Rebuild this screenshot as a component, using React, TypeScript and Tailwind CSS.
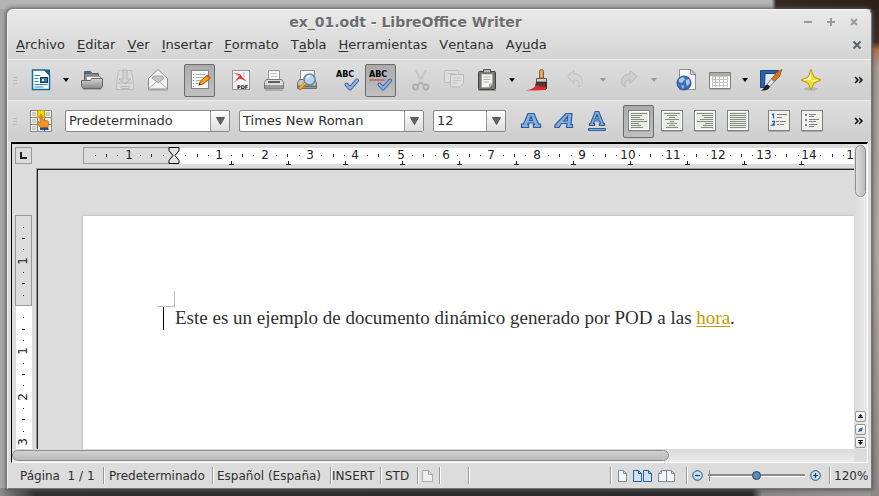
import { useEffect, useRef, useState, type ReactNode } from "react";

/* ---------- toolbar drawings ---------- */

function Icon({ children, size = 24 }: { children: ReactNode; size?: number }) {
  return (
    <svg width={size} height={size} viewBox="0 0 24 24" fill="none" aria-hidden="true" className="shrink-0">
      {children}
    </svg>
  );
}

const NewDoc = () => (
  <Icon>
    <path d="M3.500 2h12l5 5v14.500h-17z" fill="#fff" stroke="#1a6a96" strokeWidth="1.500" />
    <path d="M14.500 1.500h6.500v6z" fill="#17618c" />
    <path d="M5.500 7.500h6M5.500 10.500h4M5.500 13.500h4M5.500 16.500h13M5.500 19h9" stroke="#2f86b5" />
    <rect x="11.500" y="9.500" width="7" height="5" fill="#2b7fb0" stroke="#16394f" />
    <circle cx="14" cy="12" r="1.200" fill="#d8eefa" />
  </Icon>
);

const OpenFolder = () => (
  <Icon>
    <path d="M4.500 12V3.500h6l1.500 2h6.500V12" fill="#8b8b8b" stroke="#5d5d5d" />
    <path d="M5 4h5.500l1 2H5z" fill="#4c68a0" />
    <path d="M6.500 12V8.500h14V12" fill="#f4f4f4" stroke="#9a9a9a" />
    <path d="M1.500 12.500h9l1-2h11v8l-1.500 2H3l-1.500-2z" fill="url(#folder)" stroke="#666" />
    <path d="M3 21.500h18" stroke="#999" strokeOpacity=".7" />
    <defs>
      <linearGradient id="folder" x1="0" y1="10" x2="0" y2="21" gradientUnits="userSpaceOnUse">
        <stop stopColor="#d8d8d8" />
        <stop offset="1" stopColor="#858585" />
      </linearGradient>
    </defs>
  </Icon>
);

const Save = () => (
  <Icon>
    <path d="M5.500 2.500h13l2 12v7h-17v-7z" fill="#dadada" stroke="#bcbcbc" />
    <path d="M10 2v9H6l6 5 6-5h-4V2z" fill="#d2d2d2" stroke="#b4b4b4" />
    <path d="M4 15h16M8 18.500h8v2H8z" stroke="#b8b8b8" />
  </Icon>
);

const Mail = () => (
  <Icon>
    <path d="M2.500 10.500L12 1.500l9.500 9v10.500h-19z" fill="#f3f3f3" stroke="#8b8b8b" />
    <path d="M6 10l6 5 6-5-2-2H8z" fill="#c6c6c6" stroke="#a0a0a0" />
    <path d="M3 20.500l7-6.500M21 20.500l-7-6.500" stroke="#b5b5b5" />
    <path d="M2 22h20" stroke="#999" />
  </Icon>
);

const EditDoc = () => (
  <Icon>
    <rect x="3.500" y="2.500" width="17" height="18" fill="#fafafa" stroke="#858585" />
    <path d="M5.500 6v13" stroke="#888" strokeDasharray="1 2" />
    <path d="M8 6.500h9M8 9.500h8M8 12.500h5M8 15.500h3" stroke="#b0b0b0" />
    <path d="M11 17l1.500-4 7-6 3 3-7.500 6z" fill="#f4a21c" stroke="#a8550c" />
    <path d="M19 7.500l3 3" stroke="#e8571d" strokeWidth="2" />
    <path d="M10.500 17.500l2.200-.8-1.200-1.400z" fill="#222" />
  </Icon>
);

const Pdf = () => (
  <Icon>
    <rect x="3.500" y="2.500" width="17" height="19" fill="#f5f5f5" stroke="#979797" />
    <path d="M5 4.500l6.500 2L13 9l5 4.500-7-3-5 2.500 4-4.500z" fill="#e32b2f" />
    <path d="M5 5l6 3M15 4v5M9 12l-4 2" stroke="#f09a9a" />
    <text x="8" y="20.500" fontSize="5" fontWeight="700" fontFamily="DejaVu Sans, sans-serif" fill="#111">PDF</text>
  </Icon>
);

const Printer = () => (
  <Icon>
    <path d="M6.500 11V2.500h11V11" fill="#fbfbfb" stroke="#999" />
    <path d="M9 5.500h6M9 8.500h6" stroke="#c3c3c3" />
    <path d="M4.500 11.500h15l2 3v6h-19v-6z" fill="#dedede" stroke="#777" />
    <path d="M3 17h18v3.500H3z" fill="#9b9b9b" />
    <path d="M6 14h12" stroke="#5d5d5d" strokeWidth="2" />
    <path d="M3 22h18" stroke="#888" />
  </Icon>
);

const Preview = () => (
  <Icon>
    <path d="M5.500 11V2.500h14V11" fill="#f7f7f7" stroke="#8c8c8c" />
    <path d="M4.500 11.500h15l2 3v6h-19v-6z" fill="#c4c4c4" stroke="#6c6c6c" />
    <path d="M3 18.500h18" stroke="#6c6c6c" strokeWidth="2" />
    <circle cx="14.500" cy="11.500" r="5.500" fill="#b7d3f0" stroke="#6487ad" strokeWidth="1.600" />
    <path d="M11.500 10a4 4 0 013.500-2.200" stroke="#fff" strokeWidth="1.500" />
    <path d="M10 16l-5 4.500" stroke="#c87a10" strokeWidth="3.400" strokeLinecap="round" />
    <path d="M10 15.500l-5 4.500" stroke="#f6c04c" strokeWidth="1.400" strokeLinecap="round" />
  </Icon>
);

const Spell = ({ wavy = false }: { wavy?: boolean }) => (
  <Icon>
    <text x="0" y="9" fontSize="8" fontWeight="700" fontFamily="DejaVu Sans, sans-serif" fill="#000">ABC</text>
    {wavy && <path d="M0 11.500l1 1 1-1 1 1 1-1 1 1 1-1 1 1 1-1 1 1 1-1 1 1 1-1 1 1 1-1 1 1 1-1" stroke="#e01b24" />}
    <path d="M10.500 16.500l3.500 4 7-8" stroke="#33588f" strokeWidth="4" strokeLinecap="round" strokeLinejoin="round" />
    <path d="M10.500 16.500l3.500 4 7-8" stroke="#8fb6e8" strokeWidth="2.200" strokeLinecap="round" strokeLinejoin="round" />
  </Icon>
);

const Cut = () => (
  <Icon>
    <path d="M7 2l6.500 14M17 2l-7 14" stroke="#b8b8b8" strokeWidth="1.800" />
    <path d="M7.500 3l5.500 12M16.500 3L11 15" stroke="#dcdcdc" strokeWidth=".7" />
    <circle cx="6.500" cy="19" r="2.500" stroke="#adadad" strokeWidth="1.800" />
    <circle cx="17" cy="19" r="2.500" stroke="#adadad" strokeWidth="1.800" />
    <path d="M8 17l4-2 4 2" stroke="#adadad" strokeWidth="1.500" />
  </Icon>
);

const Copy = () => (
  <Icon>
    <rect x="2.500" y="2.500" width="14" height="12" rx="1" fill="#dedede" stroke="#bcbcbc" />
    <path d="M8.500 6.500h13v9l-3 3.500h-10z" fill="#dedede" stroke="#b9b9b9" />
    <path d="M11 10h8M11 12.500h8M11 15h4M5 5.500h8" stroke="#c6c6c6" />
  </Icon>
);

const Paste = () => (
  <Icon>
    <rect x="3.500" y="3.500" width="17" height="18" rx="1" fill="#747870" stroke="#3e413c" />
    <path d="M6.500 6h11v10l-3 3.500h-8z" fill="#f4f4f2" stroke="#a5a5a5" />
    <path d="M8.500 1.500h7V5h-7z" fill="#b5b5b5" stroke="#565656" />
    <path d="M8.500 9h7M8.500 11.500h7M8.500 14h5" stroke="#b0b0b0" />
    <path d="M14.500 19.500V16h3z" fill="#cfcfcf" stroke="#888" strokeWidth=".6" />
    <path d="M3 22.500h18" stroke="#999" />
  </Icon>
);

const FormatBrush = () => (
  <Icon>
    <path d="M13.500 10V3.500a2 2 0 014 0V10z" fill="#e3a95c" stroke="#8a5a20" />
    <path d="M10.500 14v-3.500h10V14z" fill="#d2d2c9" stroke="#5c5c55" />
    <path d="M10 14h11v7h-8l-4-2z" fill="#3b2b26" />
    <path d="M-1 22.500c5-1 8-1.500 11-5l10 1.500v3l-12 .5z" fill="#dd2b31" />
    <path d="M12 15v4M15 15v3M18 15v4" stroke="#80504a" />
  </Icon>
);

const Undo = () => (
  <Icon>
    <path d="M1.500 8.500L8 2.500V6c6 0 9 4 8 9.500-.5 2-2 3-4 3.500 2.500-4 .500-7-4-7v3.500z" fill="#d6d6d6" stroke="#bebebe" />
  </Icon>
);

const Redo = () => (
  <Icon>
    <path d="M20 8.500L13 2.500V6C7 6 4 10 5 15.500c.5 2 2 3 4 3.500-2.500-4-.5-7 4-7v3.500z" fill="#cecece" stroke="#b6b6b6" />
  </Icon>
);

const Hyperlink = () => (
  <Icon>
    <path d="M4.500 1.500H16l4.500 4.500v15.500h-16z" fill="#f8f8f8" stroke="#8e8e8e" />
    <path d="M15.500 2v4.500H20z" fill="#d9d9d9" stroke="#8e8e8e" />
    <circle cx="9" cy="15" r="7" fill="#3f70b3" stroke="#27508a" />
    <path d="M4 11l4-2 2 2-3 4-3-1zM11 12l3-1 1 4-3 3-1-3zM6 17l3 1-1 3z" fill="#a9c9ee" />
  </Icon>
);

const Table = () => (
  <Icon>
    <path d="M1.500 4.500h21v16h-21z" fill="#fbfbfa" stroke="#7c7e79" />
    <path d="M2 5h20v3H2z" fill="#a9aba6" />
    <path d="M4 8.500h16M4 11.500h16M4 14.500h16M4 17.500h16M7.500 8v11M11.500 8v11M15.500 8v11M19.500 8v11M4.500 8v11" stroke="#c2c4be" />
    <path d="M1.500 21.500h21" stroke="#aaa" />
  </Icon>
);

const Draw = () => (
  <Icon>
    <path d="M1.500 2.500h18l-2 3H6v14H1.500z" fill="#2f62a5" stroke="#1c4680" />
    <path d="M7 6h10L6 18z" fill="#dbe6f3" />
    <path d="M23 1.500l-5 2.500-5.500 7 3 2.500 5-5z" fill="#d7741e" stroke="#7d3c08" strokeWidth=".6" />
    <path d="M12.500 11l3 2.500-4.500 5-3-2z" fill="#e5e5e5" stroke="#6b6b6b" strokeWidth=".8" />
    <path d="M8 16.500l3 2c-1 3-3.500 4.500-9 4 3-1 3.500-5 6-6z" fill="#1e1e1e" />
  </Icon>
);

const Star = () => (
  <Icon>
    <ellipse cx="12" cy="21" rx="7" ry="1.800" fill="#999" fillOpacity=".5" />
    <path d="M12 1.500l3 7.500 7 3-7 3-3 7-3-7-7-3 7-3z" fill="#f4e02c" stroke="#b79a0c" strokeLinejoin="round" />
    <path d="M12 4v8H4.500l5-2.200z" fill="#fffbc4" />
    <path d="M12 12h7l-5 2z" fill="#fff49a" />
  </Icon>
);

const Styles = () => (
  <Icon>
    <path d="M1.500 1.500h21v21h-21z" fill="#eef0ea" stroke="#858883" />
    <path d="M8.500 1v22M15.500 1v22M1 8.500h22M1 15.500h22" stroke="#858883" />
    <path d="M3.500 3.500h3v3h-3zM17.500 3.500h3v3h-3zM3.500 10.500h3v3h-3zM3.500 17.500h3v3h-3z" fill="#d3d7cf" stroke="#c4c8c0" />
    <path d="M8.500 1.500h7v7h-7z" fill="#f5d908" stroke="#c4a000" />
    <path d="M11 6.500c0-1.500 2-1.500 2 0v4l6 1.500c1 2 1 4-.5 6.500h-7L8 14l1-1.500 2 1.500z" fill="#f79422" stroke="#c8640a" strokeWidth=".8" />
    <path d="M11 18.500h8.500V21H11z" fill="#2c4a82" />
  </Icon>
);

const BoldA = () => (
  <Icon>
    <path d="M9 4.500h6l4.500 10.500h2v3.500h-7V15.500h.8l-.6-1.500H9.300l-.6 1.500h.8v3h-7V15h2z M12 7.500l-1.500 4h3z" fill="#86aee0" fillRule="evenodd" stroke="#2d5a98" strokeWidth="1.200" />
  </Icon>
);

const ItalicA = () => (
  <Icon>
    <path d="M14 4.500h6l-1 11h1.500v3h-6l.4-4H9.500l-2.500 4H3v-2.500z M15.500 7.500l-3.500 4.500h3.200z" fill="#86aee0" fillRule="evenodd" stroke="#2d5a98" strokeWidth="1.200" />
  </Icon>
);

const UnderlineA = () => (
  <Icon>
    <path d="M10.200 2.500h3.600l4.700 12h1v2h-5v-2h1l-.9-2.500H9.400l-.9 2.500h1v2h-5v-2h1z M12 5.500l-1.800 4.500h3.600z" fill="#86aee0" fillRule="evenodd" stroke="#2d5a98" strokeWidth="1.100" />
    <path d="M3.500 19.500h17v2h-17z" fill="#86aee0" stroke="#2d5a98" />
  </Icon>
);

function Lines({ rows }: { rows: [number, number][] }) {
  return (
    <Icon>
      <rect x="1.500" y="1.500" width="21" height="20" fill="#e9ebe6" stroke="#7f827c" />
      <rect x="2.500" y="2.500" width="19" height="18" stroke="#fff" />
      <path d="M1.500 22.500h21" stroke="#aaa" />
      {rows.map(([x, w], i) => (
        <path key={i} d={`M${x} ${4.5 + i * 2}h${w}`} stroke="#8a8d87" strokeWidth="1" />
      ))}
    </Icon>
  );
}

const AlignLeft = () => <Lines rows={[[4, 16], [4, 11], [4, 9], [4, 13], [4, 16], [4, 8], [4, 10], [4, 12]]} />;
const AlignCenter = () => <Lines rows={[[4, 16], [7, 10], [9, 6], [5, 14], [10, 4], [7, 10], [9, 6], [6, 12]]} />;
const AlignRight = () => <Lines rows={[[4, 16], [9, 11], [11, 9], [7, 13], [4, 16], [12, 8], [10, 10], [8, 12]]} />;
const AlignJustify = () => <Lines rows={[[4, 16], [4, 16], [4, 16], [4, 16], [4, 16], [4, 16], [4, 16], [4, 16]]} />;

const Numbered = () => (
  <Icon>
    <rect x="1.500" y="1.500" width="21" height="20" fill="#eff1ec" stroke="#7f827c" />
    <path d="M1.500 22.500h21" stroke="#aaa" />
    <path d="M5 6l1.500-1v4.500M5 12.500h2.500V14L5 16h3" stroke="#33649f" strokeWidth="1.300" />
    <path d="M10 5.500h10M10 8.500h5M13 12.500h6M10 15.500h2M13 15.500h4M9 12.500h3" stroke="#80837d" />
  </Icon>
);

const Bulleted = () => (
  <Icon>
    <rect x="1.500" y="1.500" width="21" height="20" fill="#eff1ec" stroke="#7f827c" />
    <path d="M1.500 22.500h21" stroke="#aaa" />
    <path d="M5 5h2v2H5zM5 10h2v2H5zM5 15h2v2H5z" fill="#80837d" />
    <path d="M9 5.500h7M9 7.500h5M9 10.500h10M9 12.500h7M9 15.500h8M9 17.500h5" stroke="#80837d" />
  </Icon>
);

/* ---------- controls ---------- */

function Tool({ label, active = false, children }: { label: string; active?: boolean; children: ReactNode }) {
  return (
    <button
      type="button"
      aria-label={label}
      aria-pressed={active}
      className={`flex h-[33px] shrink-0 items-center justify-center ${
        active ? "mx-px w-[31px] rounded-xs border border-[#6b6b6b] bg-linear-to-b from-[#ababab] to-[#c0c0c0]" : "w-[33px]"
      }`}
    >
      {children}
    </button>
  );
}

function Drop({ label, muted = false }: { label: string; muted?: boolean }) {
  return (
    <button type="button" aria-label={label} className={`flex h-[33px] w-[18px] shrink-0 items-center justify-center ${muted ? "text-[#999]" : "text-black"}`}>
      <svg width="6" height="4" viewBox="0 0 6 4" fill="currentColor" aria-hidden="true">
        <path d="M0 0h6L3 4z" />
      </svg>
    </button>
  );
}

function Grip() {
  return (
    <div className="ml-[5px] mr-[7px] flex w-1 shrink-0 flex-col gap-[2px]">
      <i className="h-px bg-[#bbb]" />
      <i className="h-px bg-[#bbb]" />
      <i className="h-px bg-[#bbb]" />
    </div>
  );
}

function More() {
  return (
    <button type="button" aria-label="Más controles" className="ml-auto mr-2 shrink-0">
      <svg width="9" height="8" viewBox="0 0 9 8" fill="none" stroke="#000" strokeWidth="1.500" aria-hidden="true">
        <path d="M1 1l3 3-3 3M5 1l3 3-3 3" />
      </svg>
    </button>
  );
}

function Combo({ label, value, className }: { label: string; value: string; className: string }) {
  return (
    <label className={`relative h-[22px] shrink-0 rounded-xs border border-[#888] bg-white ${className}`}>
      <span className="sr-only">{label}</span>
      <select defaultValue={value} className="block h-5 w-full appearance-none bg-transparent pl-[3px] pr-5 text-[13px] leading-4 outline-none">
        <option>{value}</option>
      </select>
      <span className="pointer-events-none absolute inset-y-0 right-0 flex w-[19px] items-center justify-center border-l border-[#999] bg-linear-to-b from-white to-[#dcdcdc]">
        <svg width="9" height="8" viewBox="0 0 9 8" aria-hidden="true">
          <path d="M.5.500h8l-4 7z" fill="#666" stroke="#555" />
        </svg>
      </span>
    </label>
  );
}

const menus: [string, string, string][] = [
  ["", "A", "rchivo"],
  ["", "E", "ditar"],
  ["", "V", "er"],
  ["", "I", "nsertar"],
  ["", "F", "ormato"],
  ["T", "a", "bla"],
  ["", "H", "erramientas"],
  ["Ve", "n", "tana"],
  ["Ay", "u", "da"],
];

/* ---------- rulers ---------- */

const CM = 45.35;
const ZERO = 91;

function useSize() {
  const ref = useRef<HTMLDivElement>(null);
  const [size, setSize] = useState({ width: 771, height: 233 });
  useEffect(() => {
    const node = ref.current;
    if (!node) return;
    const observer = new ResizeObserver(() => setSize({ width: node.clientWidth, height: node.clientHeight }));
    observer.observe(node);
    return () => observer.disconnect();
  }, []);
  return { ref, ...size };
}

/* Quarter-centimetre steps that fit in the given length, left of the origin included. */
function steps(length: number) {
  const list: { q: number; at: number }[] = [];
  for (let q = -7; ZERO + (q * CM) / 4 < length; q++) {
    if (q !== 0) list.push({ q, at: Math.round(ZERO + (q * CM) / 4) });
  }
  return list;
}

function HorizontalRuler() {
  const { ref, width } = useSize();
  const tabs = Array.from({ length: Math.floor((width - ZERO) / 57) }, (_, i) => ZERO + 57 * (i + 1));
  return (
    <div ref={ref} className="min-w-0 flex-1">
      <svg width="100%" height="20" className="block" aria-label="Regla horizontal" fontFamily="DejaVu Sans, sans-serif">
        <rect x={ZERO} y="1" width="100%" height="16" fill="#fff" />
        <rect x=".5" y=".5" width={ZERO} height="16" fill="#dcdcdc" stroke="#999" />
        {steps(width + 4).map(({ q, at }) =>
          q % 4 === 0 ? (
            <text key={q} x={at} y="12" fontSize="12" textAnchor="middle" fill="#222">{Math.abs(q / 4)}</text>
          ) : q % 2 === 0 ? (
            <rect key={q} x={at} y="7" width="1" height="3" fill="#222" />
          ) : (
            <rect key={q} x={at} y="8" width="1" height="1" fill="#222" />
          ),
        )}
        {tabs.map((x) => (
          <path key={x} d={`M${x - 2} 17.500h5M${x + 0.5} 14v4`} stroke="#222" fill="none" />
        ))}
        <path d={`M${ZERO - 5} .5h10v3l-4 5 4 5v3h-10v-3l4-5-4-5z`} fill="#e4e4e4" stroke="#000" />
      </svg>
    </div>
  );
}

function VerticalRuler() {
  const { ref, height } = useSize();
  return (
    <div ref={ref} className="h-full">
      <svg width="17" height="100%" className="block" aria-label="Regla vertical" fontFamily="DejaVu Sans, sans-serif">
        <rect x="1" y={ZERO} width="16" height="100%" fill="#fff" />
        <rect x=".5" y=".5" width="16" height={ZERO - 1} fill="#dcdcdc" stroke="#999" />
        {steps(height).map(({ q, at }) =>
          q % 4 === 0 ? (
            <text key={q} transform={`translate(12 ${at}) rotate(-90)`} fontSize="12" textAnchor="middle" fill="#222">{Math.abs(q / 4)}</text>
          ) : q % 2 === 0 ? (
            <rect key={q} x="7" y={at} width="3" height="1" fill="#222" />
          ) : (
            <rect key={q} x="8" y={at} width="1" height="1" fill="#222" />
          ),
        )}
      </svg>
    </div>
  );
}

function NavButton({ label, children }: { label: string; children: ReactNode }) {
  return (
    <button type="button" aria-label={label} className="flex size-[11px] items-center justify-center rounded-xs border border-[#999] bg-linear-to-b from-white to-[#e4e4e4]">
      <svg width="5" height="5" viewBox="0 0 5 5" aria-hidden="true">{children}</svg>
    </button>
  );
}

function Divider() {
  return <i className="h-[17px] w-[2px] shrink-0 border-l border-r border-l-[#999] border-r-white" />;
}

function Globe({ plus = false }: { plus?: boolean }) {
  return (
    <svg width="11" height="11" viewBox="0 0 11 11" fill="none" aria-hidden="true">
      <circle cx="5.500" cy="5.500" r="4.800" fill="#c3e2f5" stroke="#2b4a66" />
      <path d={plus ? "M3 5.500h5M5.500 3v5" : "M3 5.500h5"} stroke="#14405f" strokeWidth="1.200" />
    </svg>
  );
}

export default function App() {
  return (
    <div
      className="h-screen overflow-hidden bg-[#a8a6a5] bg-[linear-gradient(to_right,#b4b4b4_0,#b4b4b4_772px,#35281f_776px,#2e2119_100%),linear-gradient(to_bottom,#2e2119_0,#3a2a20_42px,#b5764c_50px,#a89a94_66px,#b3a6a0_50%,#8d8887_100%),linear-gradient(to_right,#8d8d8d_0,#303030_36px,#2a2a2a_752px,#8a8685_762px,#9a9695_100%)] bg-[length:100%_9px,8px_100%,100%_8px] bg-[position:left_top,right_top,left_bottom] bg-no-repeat pb-[7px] pl-[7px] pr-[7px] pt-[9px] font-['DejaVu_Sans',sans-serif] text-[13px] text-[#2f2f2f]"
    >
      <div className="flex h-full flex-col overflow-hidden rounded-t-md border border-[#777] border-t-[#f8f8f8] border-l-[#eee] bg-[#dcdcdc] shadow-[0_0_4px_1px_#555]">
        <header className="shrink-0 bg-linear-to-b from-[#e9e9e9] to-[#d4d4d4]">
          <div className="flex h-6 items-center pr-2">
            <h1 className="flex-1 text-center text-[14px] font-bold leading-4 text-[#6d6d6d] [text-shadow:0_1px_0_#fff]">
              ex_01.odt - LibreOffice Writer
            </h1>
            <div className="flex gap-[13px] pr-1 text-[#999]">
              {[
                ["Minimizar", "M1 5h8"],
                ["Maximizar", "M1 5h8M5 1v8"],
                ["Cerrar", "M2 2l6 6M8 2L2 8"],
              ].map(([name, d]) => (
                <button key={name} type="button" aria-label={name}>
                  <svg width="10" height="10" viewBox="0 0 10 10" stroke="currentColor" strokeWidth="2" aria-hidden="true">
                    <path d={d} />
                  </svg>
                </button>
              ))}
            </div>
          </div>
          <nav className="flex h-[25px] items-center gap-3 pb-[3px] pl-2 pr-[9px] [font-kerning:none]">
            {menus.map(([before, key, after]) => (
              <button key={before + key + after} type="button" className="leading-4">
                {before}
                <span className="underline underline-offset-2">{key}</span>
                {after}
              </button>
            ))}
            <button type="button" aria-label="Cerrar documento" className="ml-auto">
              <svg width="10" height="10" viewBox="0 0 10 10" stroke="#56606b" strokeWidth="2" aria-hidden="true">
                <path d="M1.500 1.500l7 7M8.500 1.500l-7 7" />
              </svg>
            </button>
          </nav>
        </header>

        <div role="toolbar" aria-label="Estándar" className="flex h-[41px] shrink-0 items-center border-t border-[#ececec] bg-linear-to-b from-[#dedede] to-[#cecece]">
          <Grip />
          <Tool label="Nuevo"><NewDoc /></Tool>
          <Drop label="Opciones de nuevo" />
          <Tool label="Abrir"><OpenFolder /></Tool>
          <Tool label="Guardar"><Save /></Tool>
          <Tool label="Correo"><Mail /></Tool>
          <div className="ml-[9px] flex"><Tool label="Editar archivo" active><EditDoc /></Tool></div>
          <div className="ml-2 flex">
            <Tool label="Exportar PDF"><Pdf /></Tool>
            <Tool label="Imprimir"><Printer /></Tool>
            <Tool label="Vista previa"><Preview /></Tool>
          </div>
          <div className="ml-2 flex">
            <Tool label="Ortografía"><Spell /></Tool>
            <Tool label="Revisión automática" active><Spell wavy /></Tool>
          </div>
          <div className="ml-[7px] flex">
            <Tool label="Cortar"><Cut /></Tool>
            <Tool label="Copiar"><Copy /></Tool>
            <Tool label="Pegar"><Paste /></Tool>
            <Drop label="Opciones de pegado" />
            <Tool label="Clonar formato"><FormatBrush /></Tool>
          </div>
          <div className="ml-[7px] flex">
            <Tool label="Deshacer"><Undo /></Tool>
            <Drop label="Lista de deshacer" muted />
            <Tool label="Rehacer"><Redo /></Tool>
            <Drop label="Lista de rehacer" muted />
          </div>
          <div className="ml-[7px] flex">
            <Tool label="Hiperenlace"><Hyperlink /></Tool>
            <Tool label="Tabla"><Table /></Tool>
            <Drop label="Tamaño de tabla" />
            <Tool label="Dibujo"><Draw /></Tool>
          </div>
          <div className="ml-[7px] flex"><Tool label="Navegador"><Star /></Tool></div>
          <More />
        </div>

        <div role="toolbar" aria-label="Formato" className="flex h-[41px] shrink-0 items-center border-t border-[#ececec] bg-linear-to-b from-[#dedede] to-[#cecece]">
          <Grip />
          <Tool label="Estilos"><Styles /></Tool>
          <Combo label="Estilo" value="Predeterminado" className="ml-2 w-[165px]" />
          <Combo label="Fuente" value="Times New Roman" className="ml-[9px] w-[185px]" />
          <Combo label="Tamaño" value="12" className="ml-[9px] w-[73px]" />
          <div className="ml-2 flex">
            <Tool label="Negrita"><BoldA /></Tool>
            <Tool label="Cursiva"><ItalicA /></Tool>
            <Tool label="Subrayado"><UnderlineA /></Tool>
          </div>
          <div className="ml-[9px] flex">
            <Tool label="Izquierda" active><AlignLeft /></Tool>
            <Tool label="Centrado"><AlignCenter /></Tool>
            <Tool label="Derecha"><AlignRight /></Tool>
            <Tool label="Justificado"><AlignJustify /></Tool>
          </div>
          <div className="ml-2 flex">
            <Tool label="Numeración"><Numbered /></Tool>
            <Tool label="Viñetas"><Bulleted /></Tool>
          </div>
          <More />
        </div>

        <main className="ml-[3px] mr-[3px] mt-px flex min-h-0 flex-1 flex-col border-b border-l border-r border-t-2 border-b-white border-l-black border-r-white border-t-black">
          <div className="flex min-h-0 flex-1">
            <div className="flex min-w-0 flex-1 flex-col">
              <div className="flex h-6 shrink-0 items-start pl-[3px] pt-[3px]">
                <button type="button" aria-label="Tabulador" className="mr-[51px] flex size-[17px] shrink-0 items-center justify-center border border-[#999]">
                  <svg width="7" height="7" viewBox="0 0 7 7" aria-hidden="true"><path d="M1 0v6h6" fill="none" stroke="#222" strokeWidth="2" /></svg>
                </button>
                <HorizontalRuler />
              </div>
              <div className="flex min-h-0 flex-1">
                <div className="w-6 shrink-0 overflow-hidden pl-[3px] pt-[47px]"><VerticalRuler /></div>
                <div className="flex min-w-0 flex-1 border-l border-t border-[#999]">
                  <div className="min-w-0 flex-1 overflow-hidden border-l border-t border-[#222] bg-[#dcdcdc] pl-[45px] pt-[46px]">
                    <article className="h-full bg-white pl-[75px] pt-[75px] shadow-[0_0_3px_#aaa]">
                      <div className="h-4 w-[17px] border-b border-r border-[#bbb]" />
                      <div className="-mt-px flex items-center">
                        <i className="ml-[5px] mr-[11px] h-[23px] w-px bg-black" />
                        <p className="whitespace-nowrap font-['Liberation_Serif',serif] text-[19px] leading-6">
                          Este es un ejemplo de documento dinámico generado por POD a las{" "}
                          <a href="#hora" className="text-[#c49a00] underline underline-offset-2">hora</a>.
                        </p>
                      </div>
                    </article>
                  </div>
                </div>
              </div>
            </div>
            <div className="flex w-[13px] shrink-0 flex-col items-center bg-linear-to-r from-[#dadada] to-[#ececec] pt-px">
              <div className="h-[52px] w-[11px] rounded-full border border-[#8d8d8d] bg-linear-to-r from-[#dedede] to-[#bcbcbc]" />
              <div className="mt-auto flex flex-col gap-[2px] pb-px">
                <NavButton label="Página anterior"><path d="M2.500 0L5 2.500H3V3h2v1H0V3h2v-.5H0z" fill="#111" /></NavButton>
                <NavButton label="Navegación"><path d="M0 5l1-3 4-2-1 4z" fill="#356b99" /></NavButton>
                <NavButton label="Página siguiente"><path d="M0 0h5v1H3v1h2L2.500 5 0 2h2V1H0z" fill="#111" /></NavButton>
              </div>
            </div>
          </div>
          <div className="mr-[13px] h-[13px] shrink-0 bg-linear-to-b from-[#dadada] to-[#ededed] pt-px">
            <div className="h-[11px] w-[78%] rounded-full border border-[#8d8d8d] bg-linear-to-b from-[#d2d2d2] to-[#b9b9b9]" />
          </div>
        </main>

        <footer className="flex h-[25px] shrink-0 items-center whitespace-pre text-[12px] leading-4">
          <span className="w-[95px] shrink-0 pl-3">Página  1 / 1</span>
          <Divider />
          <span className="w-[107px] shrink-0 pl-1">Predeterminado</span>
          <Divider />
          <span className="w-[116px] shrink-0 pl-[3px]">Español (España)</span>
          <Divider />
          <span className="w-12 shrink-0">INSERT</span>
          <Divider />
          <span className="w-[35px] shrink-0 pl-[3px]">STD</span>
          <Divider />
          <span className="flex w-5 shrink-0 items-center pl-[3px]">
            <svg width="11" height="12" viewBox="0 0 11 12" fill="#eee" stroke="#aaa" aria-hidden="true"><path d="M.5.500h6l4 4v7H.500zM6.500.500v4h4" /></svg>
          </span>
          <Divider />
          <span className="w-[27px] shrink-0" />
          <Divider />
          <span className="min-w-0 flex-1" />
          <Divider />
          <div className="flex w-[74px] shrink-0 items-center gap-[6px] pl-[6px]">
            <button type="button" aria-label="Una página">
              <svg width="9" height="12" viewBox="0 0 9 12" fill="#f3f6f8" stroke="#7b8d9b" aria-hidden="true"><path d="M.5.500h5l3 3v8H.500zM5.500.500v3h3" /></svg>
            </button>
            <button type="button" aria-label="Varias páginas">
              <svg width="19" height="12" viewBox="0 0 19 12" fill="#cfe3f7" stroke="#2b5f9c" aria-hidden="true"><path d="M.5.500h5l3 3v8H.500zM5.500.500v3h3M10.500.500h5l3 3v8h-8zM15.500.500v3h3" /></svg>
            </button>
            <button type="button" aria-label="Modo libro">
              <svg width="17" height="12" viewBox="0 0 17 12" fill="#f3f6f8" stroke="#7b8d9b" aria-hidden="true"><path d="M3.500.500h5v11h-8v-8zM3.500.500v3h-3M8.500.500h5l3 3v8h-8zM13.500.500v3h3" /></svg>
            </button>
          </div>
          <Divider />
          <div className="flex w-[141px] shrink-0 items-center pl-1">
            <button type="button" aria-label="Alejar"><Globe /></button>
            <div className="relative mx-[5px] flex h-3 w-[97px] items-center">
              <i className="absolute left-px top-0 h-[11px] w-px bg-[#888]" />
              <input
                type="range"
                aria-label="Escala"
                defaultValue={50}
                className="h-3 w-full appearance-none bg-transparent [&::-webkit-slider-runnable-track]:h-[3px] [&::-webkit-slider-runnable-track]:border-b [&::-webkit-slider-runnable-track]:border-white [&::-webkit-slider-runnable-track]:bg-[#8c8c8c] [&::-webkit-slider-thumb]:-mt-[3px] [&::-webkit-slider-thumb]:size-[9px] [&::-webkit-slider-thumb]:appearance-none [&::-webkit-slider-thumb]:rounded-full [&::-webkit-slider-thumb]:border [&::-webkit-slider-thumb]:border-[#24435a] [&::-webkit-slider-thumb]:bg-[#5a8fb0]"
              />
            </div>
            <button type="button" aria-label="Acercar"><Globe plus /></button>
          </div>
          <Divider />
          <span className="w-10 shrink-0 pl-[3px]">120%</span>
        </footer>
      </div>
    </div>
  );
}
